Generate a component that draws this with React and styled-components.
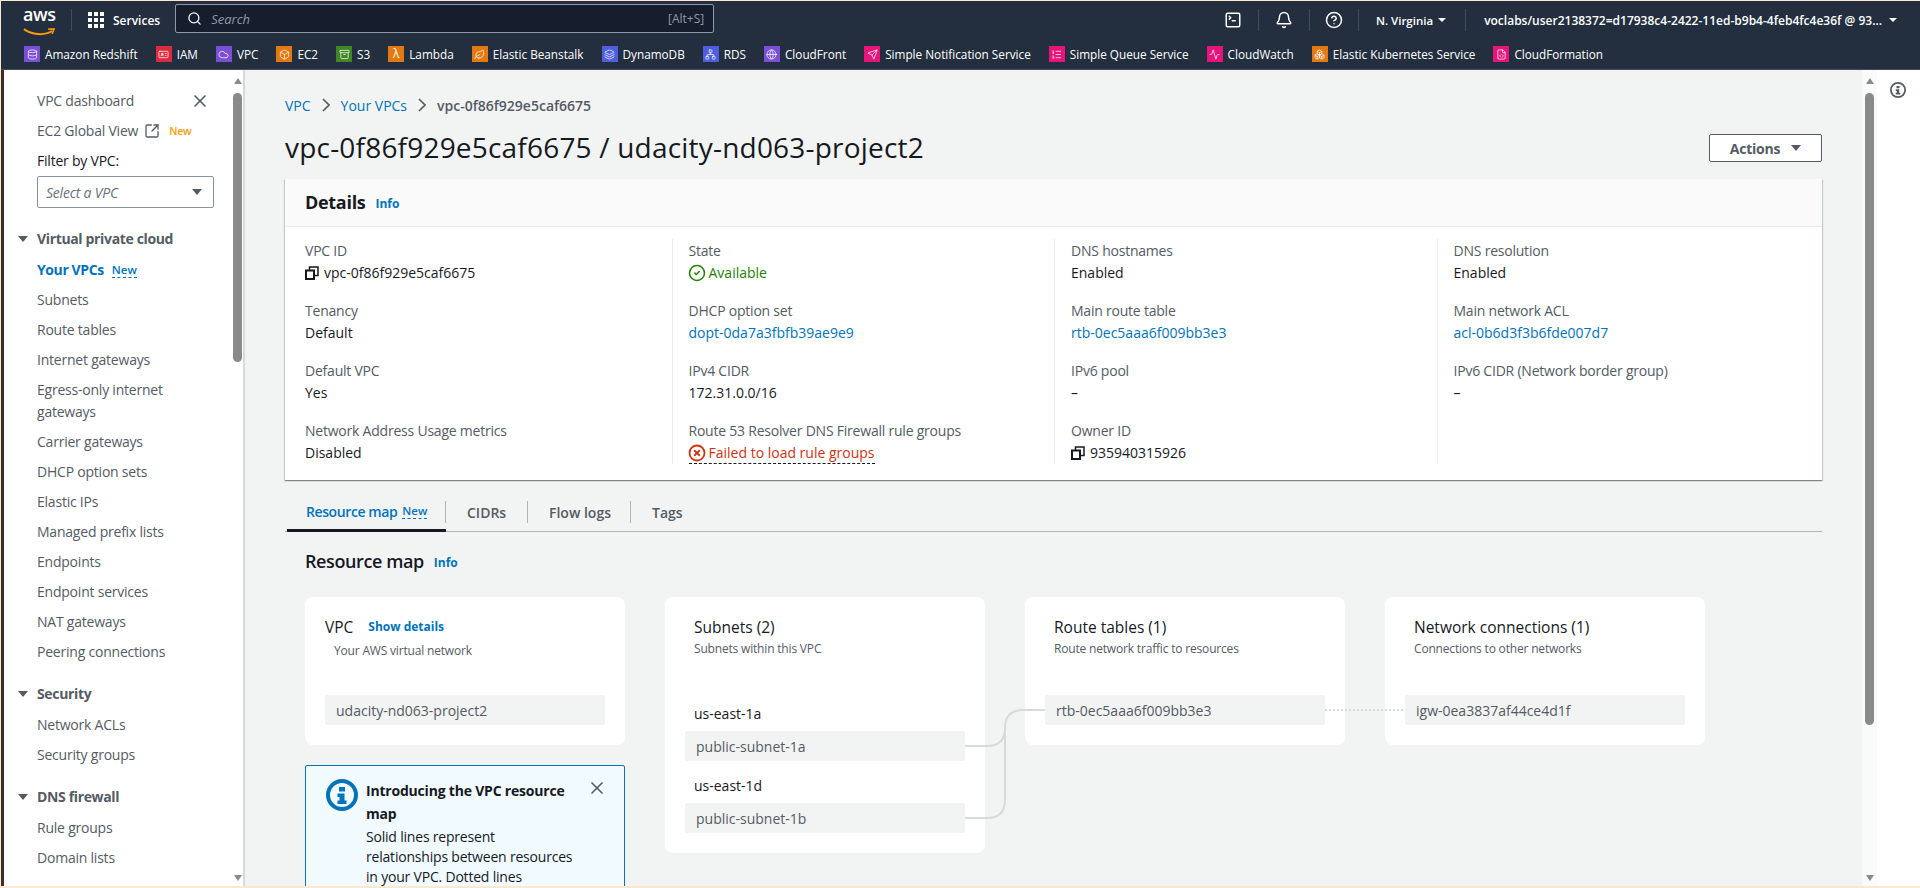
import styled, { createGlobalStyle } from "styled-components";
import {
  Search, Bell, CircleHelp, SquareTerminal, X, SquareArrowOutUpRight, CircleCheck, CircleX,
  Database, IdCard, Cloud, Box, Archive, Leaf, Layers, Network, Globe, Send, ListOrdered, Activity, Boxes, FileCode,
} from "lucide-react";

const GlobalStyle = createGlobalStyle`
  html, body { margin: 0; padding: 0; height: 100%; overflow: hidden; }
  body { font-family: "Open Sans", "Liberation Sans", sans-serif; font-size: 14px; color: #16191f; background: #fbe9cf; }
  * { box-sizing: border-box; }
`;

const Frame = styled.div`
  height: 888px;
  padding: 1px 0 2px 1px;
  display: flex;
  flex-direction: column;
  background: #fbe9cf;
  overflow: hidden;
`;
const TopNav = styled.header`
  height: 38px;
  flex: none;
  background: #232f3e;
  display: flex;
  align-items: center;
  color: #fff;
  padding-left: 22px;
`;
const LogoBox = styled.div`
  width: 32px;
  height: 24px;
  flex: none;
  margin-bottom: 2px;
`;
const LogoText = styled.span`
  display: block;
  font-weight: 600;
  font-size: 18px;
  line-height: 15px;
  letter-spacing: -0.4px;
  text-align: center;
`;
const NavDivider = styled.span`
  width: 1px;
  height: 22px;
  background: #414d5c;
  flex: none;
  margin: ${(p) => p.$margin || "0"};
`;
const ServicesLabel = styled.span`
  font-size: 12px;
  font-weight: 600;
  margin-left: 9px;
`;
const GridIcon = styled.div`
  display: grid;
  grid-template-columns: repeat(3, 4px);
  gap: 2px;
  & > i { width: 4px; height: 4px; background: #fff; display: block; }
`;
const SearchBox = styled.div`
  width: 539px;
  height: 29px;
  margin: 0 0 3px 15px;
  background: #161e2d;
  border: 1px solid #8d99a8;
  border-radius: 2px;
  display: flex;
  align-items: center;
  padding: 0 9px 0 11px;
  flex: none;
`;
const SearchText = styled.span`
  font-style: italic;
  font-size: 13px;
  color: #8d99a8;
  margin-left: 9px;
  flex: 1;
`;
const SearchHint = styled.span`
  font-size: 12px;
  color: #8d99a8;
`;
const NavRight = styled.div`
  margin-left: auto;
  display: flex;
  align-items: center;
  padding-right: 23px;
`;
const NavIconSlot = styled.div`
  width: ${(p) => p.$w || 50}px;
  display: flex;
  justify-content: center;
`;
const NavText = styled.span`
  font-size: ${(p) => p.$size || 11.5}px;
  font-weight: 600;
  white-space: nowrap;
  margin-left: ${(p) => p.$ml || 0}px;
`;
const Caret = styled.span`
  display: inline-block;
  width: 0;
  height: 0;
  border-left: ${(p) => p.$s || 4}px solid transparent;
  border-right: ${(p) => p.$s || 4}px solid transparent;
  border-top: ${(p) => (p.$s || 4) * 1.2}px solid ${(p) => p.$c || "#fff"};
  margin-left: ${(p) => p.$ml || 7}px;
  flex: none;
`;
const FavBar = styled.nav`
  height: 31px;
  flex: none;
  background: #232f3e;
  display: flex;
  align-items: center;
  padding-left: 23px;
  gap: 18px;
  color: #fff;
  border-bottom: 1px solid #414d5c;
`;
const Fav = styled.span`
  display: flex;
  align-items: center;
  gap: 5px;
  font-size: 11.75px;
  font-weight: 500;
  white-space: nowrap;
`;
const Tile = styled.span`
  width: 16px;
  height: 16px;
  flex: none;
  display: flex;
  align-items: center;
  justify-content: center;
  background: ${(p) => p.$bg};
  font-size: 12px;
  line-height: 16px;
  color: #fff;
`;
const Body = styled.div`
  flex: 1;
  min-height: 0;
  display: flex;
  border-left: 3px solid #3a302a;
  background: #f2f3f3;
`;
const Sidebar = styled.aside`
  width: 241px;
  flex: none;
  background: #fff;
  border-right: 2px solid #d5dbdb;
  display: flex;
  position: relative;
  overflow: hidden;
`;
const SideInner = styled.div`
  flex: 1;
  padding: 16px 0 0 33px;
  color: #545b64;
  min-width: 0;
`;
const SideLink = styled.div`
  font-size: 14px;
  line-height: 22px;
  padding: 4px 30px 4px 0;
  letter-spacing: ${(p) => (p.$active ? "-0.4px" : "-0.22px")};
  color: ${(p) => (p.$active ? "#0073bb" : "#545b64")};
  font-weight: ${(p) => (p.$active ? 700 : 400)};
  display: flex;
  align-items: center;
`;
const SideGroup = styled.div`
  margin-bottom: ${(p) => p.$mb || 0}px;
`;
const SideHead = styled.div`
  font-size: 14px;
  font-weight: 700;
  letter-spacing: -0.35px;
  line-height: 22px;
  padding: 0 0 5px 0;
  display: flex;
  align-items: center;
  position: relative;
  & > span:first-child { position: absolute; left: -19px; top: 8px; margin: 0; }
`;
const CloseBtn = styled.span`
  position: absolute;
  right: 33px;
  top: 21px;
  display: flex;
  color: #545b64;
`;
const NewOrange = styled.span`
  color: #ff9900;
  font-size: 10.5px;
  font-weight: 600;
  margin-left: 9px;
`;
const NewBlue = styled.span`
  color: #0073bb;
  font-size: 11.5px;
  font-weight: 600;
  letter-spacing: 0;
  border-bottom: 1px dashed #0073bb;
  line-height: 14px;
  margin-left: ${(p) => p.$ml || 8}px;
`;
const ExternalIcon = styled(SquareArrowOutUpRight)`
  margin-left: 6px;
  flex: none;
`;
const FilterLabel = styled.div`
  color: #16191f;
  font-size: 14px;
  letter-spacing: -0.22px;
  line-height: 22px;
  padding-top: 4px;
`;
const SelectBox = styled.div`
  width: 177px;
  height: 32px;
  margin: 4px 0 20px;
  border: 1px solid #879596;
  border-radius: 2px;
  display: flex;
  align-items: center;
  justify-content: space-between;
  padding: 0 11px 0 8px;
  font-style: italic;
  font-size: 14px;
  letter-spacing: -0.22px;
  color: #687078;
`;
const ScrollTrack = styled.div`
  width: ${(p) => p.$w}px;
  flex: none;
  background: ${(p) => p.$bg || "#fff"};
  display: flex;
  flex-direction: column;
  align-items: center;
  padding-top: 8px;
  position: relative;
`;
const ScrollThumb = styled.div`
  width: 9px;
  height: ${(p) => p.$h}px;
  background: #8a8a8a;
  border-radius: 5px;
  margin-top: 9px;
`;
const ScrollUp = styled.span`
  width: 0;
  height: 0;
  border-left: 4px solid transparent;
  border-right: 4px solid transparent;
  border-bottom: 6px solid #8a8a8a;
`;
const ScrollDown = styled.span`
  position: absolute;
  bottom: 5px;
  width: 0;
  height: 0;
  border-left: 4px solid transparent;
  border-right: 4px solid transparent;
  border-top: 6px solid #8a8a8a;
`;
const Main = styled.main`
  flex: 1;
  min-width: 0;
  overflow: hidden;
  padding: 21px 38px 0 40px;
`;
const Crumbs = styled.div`
  display: flex;
  align-items: center;
  height: 28px;
  font-size: 14px;
  color: #545b64;
  white-space: nowrap;
`;
const CrumbLink = styled.span`
  color: #0073bb;
`;
const CrumbCurrent = styled.span`
  color: #545b64;
  font-weight: 600;
`;
const Chev = styled.svg`
  margin: 0 11px;
  flex: none;
`;
const TitleRow = styled.div`
  display: flex;
  align-items: center;
  justify-content: space-between;
  height: 44px;
  margin: 6px 2px 10px 0;
`;
const Title = styled.h1`
  margin: 0;
  font-size: 28px;
  font-weight: 400;
  letter-spacing: 0.2px;
  line-height: 36px;
  color: #16191f;
  white-space: nowrap;
`;
const ActionBtn = styled.button`
  width: 113px;
  height: 28px;
  margin-top: 2px;
  background: #fff;
  border: 1px solid #545b64;
  border-radius: 2px;
  font: 700 14px "Open Sans", sans-serif;
  letter-spacing: -0.2px;
  color: #545b64;
  display: flex;
  align-items: center;
  justify-content: center;
`;
const Card = styled.section`
  background: #fff;
  box-shadow: 0 1px 1px 0 rgba(0, 28, 36, 0.3), 1px 1px 1px 0 rgba(0, 28, 36, 0.15), -1px 1px 1px 0 rgba(0, 28, 36, 0.15);
  margin-right: 2px;
  height: 301px;
`;
const CardHead = styled.div`
  height: 48px;
  background: #fafafa;
  border-bottom: 1px solid #eaeded;
  display: flex;
  align-items: center;
  padding: 0 20px 2px;
`;
const CardTitle = styled.h2`
  margin: 0;
  font-size: 18px;
  font-weight: 700;
  letter-spacing: -0.3px;
  color: #16191f;
`;
const InfoLink = styled.span`
  color: #0073bb;
  font-size: 12px;
  font-weight: 700;
  margin: 3px 0 0 10px;
`;
const DetailGrid = styled.div`
  display: grid;
  grid-template-columns: 386.5px 382.5px 382.5px 1fr;
  padding: 12px 0 0 0;
`;
const DetailCol = styled.div`
  height: 225px;
  padding: 1px 0 0 ${(p) => (p.$first ? 20 : 16)}px;
  border-left: ${(p) => (p.$first ? "none" : "1px solid #eaeded")};
  display: flex;
  flex-direction: column;
  gap: 16px;
`;
const Field = styled.div`
  height: 44px;
  display: flex;
  flex-direction: column;
  white-space: nowrap;
`;
const FieldLabel = styled.div`
  font-size: 14px;
  letter-spacing: -0.22px;
  line-height: 22px;
  color: #545b64;
`;
const FieldValue = styled.div`
  font-size: 14px;
  line-height: 22px;
  color: ${(p) => p.$color || "#16191f"};
  display: flex;
  align-items: center;
  gap: 5px;
`;
const Dashed = styled.span`
  display: inline-flex;
  align-items: center;
  gap: 5px;
  height: 22px;
  border-bottom: 1px dashed #16191f;
`;
const StatusIcon = styled.span`
  display: flex;
  margin: 0 -2px 0 -1px;
`;
const TabBar = styled.div`
  margin: 14px 2px 0 0;
  height: 38px;
  display: flex;
  border-bottom: 1px solid #aab7b8;
  padding-left: 2px;
`;
const Tab = styled.div`
  width: ${(p) => p.$w}px;
  height: ${(p) => (p.$active ? 38 : 37)}px;
  flex: none;
  padding-left: ${(p) => (p.$active ? 19 : 21)}px;
  display: flex;
  align-items: center;
  font-size: 14px;
  font-weight: 600;
  letter-spacing: ${(p) => (p.$active ? "-0.4px" : "0")};
  color: ${(p) => (p.$active ? "#0073bb" : "#545b64")};
  border-bottom: ${(p) => (p.$active ? "3px solid #16191f" : "none")};
  position: relative;
  white-space: nowrap;
  &::after {
    content: "";
    display: ${(p) => (p.$last ? "none" : "block")};
    position: absolute;
    right: 0;
    top: 7px;
    height: 22px;
    width: 1px;
    background: #aab7b8;
  }
`;
const MapSection = styled.div`
  padding-left: 20px;
`;
const MapHead = styled.div`
  display: flex;
  align-items: center;
  height: 28px;
  margin: 15px 0 22px;
`;
const MapTitle = styled.h2`
  margin: 0;
  font-size: 18px;
  font-weight: 600;
  letter-spacing: -0.4px;
  color: #16191f;
`;
const MapColumns = styled.div`
  position: relative;
  display: flex;
  gap: 40px;
  align-items: flex-start;
`;
const MapColumn = styled.div`
  width: 320px;
  flex: none;
  display: flex;
  flex-direction: column;
  gap: 20px;
`;
const MapCard = styled.div`
  background: #fff;
  border-radius: 8px;
  width: 320px;
  height: ${(p) => p.$h}px;
  padding: 19px 20px 0;
  flex: none;
`;
const MapCardTitle = styled.div`
  font-size: 15.5px;
  line-height: 22px;
  color: #16191f;
  padding-left: ${(p) => p.$pl ?? 9}px;
  display: flex;
  align-items: center;
`;
const ShowDetails = styled.span`
  color: #0073bb;
  font-size: 12px;
  font-weight: 700;
  margin-left: 15px;
`;
const MapCardSub = styled.div`
  font-size: 12px;
  letter-spacing: -0.18px;
  line-height: 18px;
  color: #545b64;
  padding-left: 9px;
  margin: ${(p) => p.$mt}px 0 ${(p) => p.$mb}px;
`;
const Chip = styled.div`
  height: 30px;
  width: 280px;
  background: #f2f3f3;
  border-radius: 2px;
  padding: 0 11px;
  display: flex;
  align-items: center;
  font-size: 14px;
  color: #545b64;
  white-space: nowrap;
`;
const ZoneLabel = styled.div`
  font-size: 14px;
  line-height: 22px;
  padding-left: 9px;
  color: #16191f;
  margin: ${(p) => p.$m || "0"};
`;
const Flash = styled.div`
  width: 320px;
  border: 1px solid #0073bb;
  border-radius: 2px;
  background: #f1faff;
  padding: 13px 18px 20px 20px;
  display: flex;
  gap: 8px;
  position: relative;
`;
const FlashBody = styled.div`
  flex: 1;
  font-size: 14px;
  letter-spacing: -0.2px;
  line-height: 20px;
  padding-right: 28px;
`;
const FlashTitle = styled.div`
  font-weight: 700;
  line-height: 23px;
  margin-bottom: 2px;
`;
const FlashClose = styled.span`
  position: absolute;
  right: 17px;
  top: 12px;
  display: flex;
  color: #545b64;
`;
const FlashIcon = styled.span`
  display: flex;
  color: #0073bb;
  flex: none;
  height: 32px;
`;
const Connectors = styled.svg`
  position: absolute;
  left: 0;
  top: 0;
  pointer-events: none;
`;
const ToolsPanel = styled.aside`
  width: 43px;
  flex: none;
  background: #fff;
  display: flex;
  justify-content: center;
  align-items: flex-start;
  padding: 12px 2px 0 0;
  color: #545b64;
`;

const favourites = [
  ["Amazon Redshift", "#7b4fd6", Database],
  ["IAM", "#dd2a3c", IdCard],
  ["VPC", "#7b4fd6", Cloud],
  ["EC2", "#e47911", Box],
  ["S3", "#3f8624", Archive],
  ["Lambda", "#e47911", null],
  ["Elastic Beanstalk", "#e47911", Leaf],
  ["DynamoDB", "#4d5ee0", Layers],
  ["RDS", "#4d5ee0", Network],
  ["CloudFront", "#7b4fd6", Globe],
  ["Simple Notification Service", "#e7157b", Send],
  ["Simple Queue Service", "#e7157b", ListOrdered],
  ["CloudWatch", "#e7157b", Activity],
  ["Elastic Kubernetes Service", "#e47911", Boxes],
  ["CloudFormation", "#e7157b", FileCode],
];

const vpcLinks = ["Subnets", "Route tables", "Internet gateways", "Egress-only internet gateways", "Carrier gateways", "DHCP option sets", "Elastic IPs", "Managed prefix lists", "Endpoints", "Endpoint services", "NAT gateways", "Peering connections"];

const Chevron = () => (
  <Chev width="8" height="14" viewBox="0 0 8 14" fill="none">
    <path d="M1 1l6 6-6 6" stroke="#545b64" strokeWidth="1.6" />
  </Chev>
);

const CopyIcon = () => (
  <svg width="14" height="14" viewBox="0 0 14 14" fill="none" stroke="#16191f" strokeWidth="2">
    <rect x="1" y="4.5" width="8" height="8.5" />
    <path d="M4.5 4.5V1H13V9.5H9" strokeWidth="1.5" />
  </svg>
);

// bold "i" in a ring, used by the flash box and the tools panel
const InfoGlyph = ({ size, ring }) => (
  <svg width={size} height={size} viewBox="0 0 32 32" fill="none">
    <circle cx="16" cy="16" r={16 - ring / 2} stroke="currentColor" strokeWidth={ring} />
    <rect x="13" y="8" width="6" height="4.5" fill="currentColor" />
    <path d="M11.5 14.5H18.5V21.5H20.5V25H11.5V21.5H13.5V18H11.5Z" fill="currentColor" />
  </svg>
);

const App = () => {
  return (
    <Frame>
      <GlobalStyle />
      <TopNav>
        <LogoBox>
          <LogoText>aws</LogoText>
          <svg width="32" height="9" viewBox="0 0 33 9" fill="none">
            <path d="M1 1c8 6 21 7 29 2" stroke="#ff9900" strokeWidth="2" />
            <path d="M26 1h6l-2 5" stroke="#ff9900" strokeWidth="1.6" />
          </svg>
        </LogoBox>
        <NavDivider $margin="0 16px" />
        <GridIcon>
          {Array.from({ length: 9 }).map((_, i) => (
            <i key={i} />
          ))}
        </GridIcon>
        <ServicesLabel>Services</ServicesLabel>
        <SearchBox>
          <Search size={15} color="#fff" strokeWidth={2} />
          <SearchText>Search</SearchText>
          <SearchHint>[Alt+S]</SearchHint>
        </SearchBox>
        <NavRight>
          <NavIconSlot $w={50}>
            <SquareTerminal size={18} strokeWidth={2} />
          </NavIconSlot>
          <NavDivider />
          <NavIconSlot $w={50}>
            <Bell size={18} strokeWidth={2} />
          </NavIconSlot>
          <NavDivider />
          <NavIconSlot $w={48}>
            <CircleHelp size={18} strokeWidth={2} />
          </NavIconSlot>
          <NavDivider />
          <NavText $ml={17}>N. Virginia</NavText>
          <Caret $ml={5} />
          <NavDivider $margin="0 18px 0 19px" />
          <NavText $size={12}>voclabs/user2138372=d17938c4-2422-11ed-b9b4-4feb4fc4e36f @ 93...</NavText>
          <Caret />
        </NavRight>
      </TopNav>
      <FavBar>
        {favourites.map(([name, bg, Icon]) => (
          <Fav key={name}>
            <Tile $bg={bg}>{Icon ? <Icon size={11} strokeWidth={1.6} /> : "λ"}</Tile>
            {name}
          </Fav>
        ))}
      </FavBar>
      <Body>
        <Sidebar>
          <SideInner>
            <SideLink>VPC dashboard</SideLink>
            <CloseBtn>
              <X size={20} />
            </CloseBtn>
            <SideLink>
              EC2 Global View
              <ExternalIcon size={16} strokeWidth={2} />
              <NewOrange>New</NewOrange>
            </SideLink>
            <FilterLabel>Filter by VPC:</FilterLabel>
            <SelectBox>
              Select a VPC
              <Caret $s={5.5} $c="#545b64" />
            </SelectBox>
            <SideGroup $mb={16}>
              <SideHead>
                <Caret $s={5} $c="#545b64" />
                Virtual private cloud
              </SideHead>
              <SideLink $active>
                Your VPCs
                <NewBlue>New</NewBlue>
              </SideLink>
              {vpcLinks.map((l) => (
                <SideLink key={l}>{l}</SideLink>
              ))}
            </SideGroup>
            <SideGroup $mb={16}>
              <SideHead>
                <Caret $s={5} $c="#545b64" />
                Security
              </SideHead>
              <SideLink>Network ACLs</SideLink>
              <SideLink>Security groups</SideLink>
            </SideGroup>
            <SideGroup>
              <SideHead>
                <Caret $s={5} $c="#545b64" />
                DNS firewall
              </SideHead>
              <SideLink>Rule groups</SideLink>
              <SideLink>Domain lists</SideLink>
            </SideGroup>
          </SideInner>
          <ScrollTrack $w={11}>
            <ScrollUp />
            <ScrollThumb $h={269} />
            <ScrollDown />
          </ScrollTrack>
        </Sidebar>
        <Main>
          <Crumbs>
            <CrumbLink>VPC</CrumbLink>
            <Chevron />
            <CrumbLink>Your VPCs</CrumbLink>
            <Chevron />
            <CrumbCurrent>vpc-0f86f929e5caf6675</CrumbCurrent>
          </Crumbs>
          <TitleRow>
            <Title>vpc-0f86f929e5caf6675 / udacity-nd063-project2</Title>
            <ActionBtn>
              Actions
              <Caret $s={5.5} $c="#545b64" $ml={11} />
            </ActionBtn>
          </TitleRow>
          <Card>
            <CardHead>
              <CardTitle>Details</CardTitle>
              <InfoLink>Info</InfoLink>
            </CardHead>
            <DetailGrid>
              <DetailCol $first>
                <Field>
                  <FieldLabel>VPC ID</FieldLabel>
                  <FieldValue>
                    <CopyIcon />
                    vpc-0f86f929e5caf6675
                  </FieldValue>
                </Field>
                <Field>
                  <FieldLabel>Tenancy</FieldLabel>
                  <FieldValue>Default</FieldValue>
                </Field>
                <Field>
                  <FieldLabel>Default VPC</FieldLabel>
                  <FieldValue>Yes</FieldValue>
                </Field>
                <Field>
                  <FieldLabel>Network Address Usage metrics</FieldLabel>
                  <FieldValue>Disabled</FieldValue>
                </Field>
              </DetailCol>
              <DetailCol>
                <Field>
                  <FieldLabel>State</FieldLabel>
                  <FieldValue $color="#1d8102">
                    <StatusIcon>
                      <CircleCheck size={18} strokeWidth={2} />
                    </StatusIcon>
                    Available
                  </FieldValue>
                </Field>
                <Field>
                  <FieldLabel>DHCP option set</FieldLabel>
                  <FieldValue $color="#0073bb">dopt-0da7a3fbfb39ae9e9</FieldValue>
                </Field>
                <Field>
                  <FieldLabel>IPv4 CIDR</FieldLabel>
                  <FieldValue>172.31.0.0/16</FieldValue>
                </Field>
                <Field>
                  <FieldLabel>Route 53 Resolver DNS Firewall rule groups</FieldLabel>
                  <FieldValue $color="#d13212">
                    <Dashed>
                      <StatusIcon>
                        <CircleX size={18} strokeWidth={2.4} />
                      </StatusIcon>
                      Failed to load rule groups
                    </Dashed>
                  </FieldValue>
                </Field>
              </DetailCol>
              <DetailCol>
                <Field>
                  <FieldLabel>DNS hostnames</FieldLabel>
                  <FieldValue>Enabled</FieldValue>
                </Field>
                <Field>
                  <FieldLabel>Main route table</FieldLabel>
                  <FieldValue $color="#0073bb">rtb-0ec5aaa6f009bb3e3</FieldValue>
                </Field>
                <Field>
                  <FieldLabel>IPv6 pool</FieldLabel>
                  <FieldValue>–</FieldValue>
                </Field>
                <Field>
                  <FieldLabel>Owner ID</FieldLabel>
                  <FieldValue>
                    <CopyIcon />
                    935940315926
                  </FieldValue>
                </Field>
              </DetailCol>
              <DetailCol>
                <Field>
                  <FieldLabel>DNS resolution</FieldLabel>
                  <FieldValue>Enabled</FieldValue>
                </Field>
                <Field>
                  <FieldLabel>Main network ACL</FieldLabel>
                  <FieldValue $color="#0073bb">acl-0b6d3f3b6fde007d7</FieldValue>
                </Field>
                <Field>
                  <FieldLabel>IPv6 CIDR (Network border group)</FieldLabel>
                  <FieldValue>–</FieldValue>
                </Field>
              </DetailCol>
            </DetailGrid>
          </Card>
          <TabBar>
            <Tab $active $w={159}>
              Resource map
              <NewBlue $ml={5}>New</NewBlue>
            </Tab>
            <Tab $w={82}>CIDRs</Tab>
            <Tab $w={103}>Flow logs</Tab>
            <Tab $w={80} $last>
              Tags
            </Tab>
          </TabBar>
          <MapSection>
            <MapHead>
              <MapTitle>Resource map</MapTitle>
              <InfoLink>Info</InfoLink>
            </MapHead>
            <MapColumns>
              <MapColumn>
                <MapCard $h={148}>
                  <MapCardTitle $pl={0}>
                    VPC
                    <ShowDetails>Show details</ShowDetails>
                  </MapCardTitle>
                  <MapCardSub $mt={4} $mb={35}>
                    Your AWS virtual network
                  </MapCardSub>
                  <Chip>udacity-nd063-project2</Chip>
                </MapCard>
                <Flash>
                  <FlashIcon>
                    <InfoGlyph size={32} ring={4} />
                  </FlashIcon>
                  <FlashBody>
                    <FlashTitle>Introducing the VPC resource map</FlashTitle>
                    Solid lines represent relationships between resources in your VPC. Dotted lines
                  </FlashBody>
                  <FlashClose>
                    <X size={20} />
                  </FlashClose>
                </Flash>
              </MapColumn>
              <MapColumn>
                <MapCard $h={256}>
                  <MapCardTitle>Subnets (2)</MapCardTitle>
                  <MapCardSub $mt={2} $mb={45}>
                    Subnets within this VPC
                  </MapCardSub>
                  <ZoneLabel $m="0 0 6px">us-east-1a</ZoneLabel>
                  <Chip>public-subnet-1a</Chip>
                  <ZoneLabel $m="14px 0 6px">us-east-1d</ZoneLabel>
                  <Chip>public-subnet-1b</Chip>
                </MapCard>
              </MapColumn>
              <MapColumn>
                <MapCard $h={148}>
                  <MapCardTitle>Route tables (1)</MapCardTitle>
                  <MapCardSub $mt={2} $mb={37}>
                    Route network traffic to resources
                  </MapCardSub>
                  <Chip>rtb-0ec5aaa6f009bb3e3</Chip>
                </MapCard>
              </MapColumn>
              <MapColumn>
                <MapCard $h={148}>
                  <MapCardTitle>Network connections (1)</MapCardTitle>
                  <MapCardSub $mt={2} $mb={37}>
                    Connections to other networks
                  </MapCardSub>
                  <Chip>igw-0ea3837af44ce4d1f</Chip>
                </MapCard>
              </MapColumn>
              <Connectors width="1400" height="260" viewBox="0 0 1400 260" fill="none">
                <path d="M660 149H682Q700 149 700 131V131Q700 113 718 113H740" stroke="#d5dbdb" strokeWidth="2" />
                <path d="M660 221H682Q700 221 700 203V131" stroke="#d5dbdb" strokeWidth="2" />
                <path d="M1020 113H1100" stroke="#d5dbdb" strokeWidth="2" strokeDasharray="2 2" />
              </Connectors>
            </MapColumns>
          </MapSection>
        </Main>
        <ScrollTrack $w={15} $bg="#fafafa">
          <ScrollUp />
          <ScrollThumb $h={632} />
          <ScrollDown />
        </ScrollTrack>
        <ToolsPanel>
          <InfoGlyph size={16} ring={3.5} />
        </ToolsPanel>
      </Body>
    </Frame>
  );
};

export default App;
